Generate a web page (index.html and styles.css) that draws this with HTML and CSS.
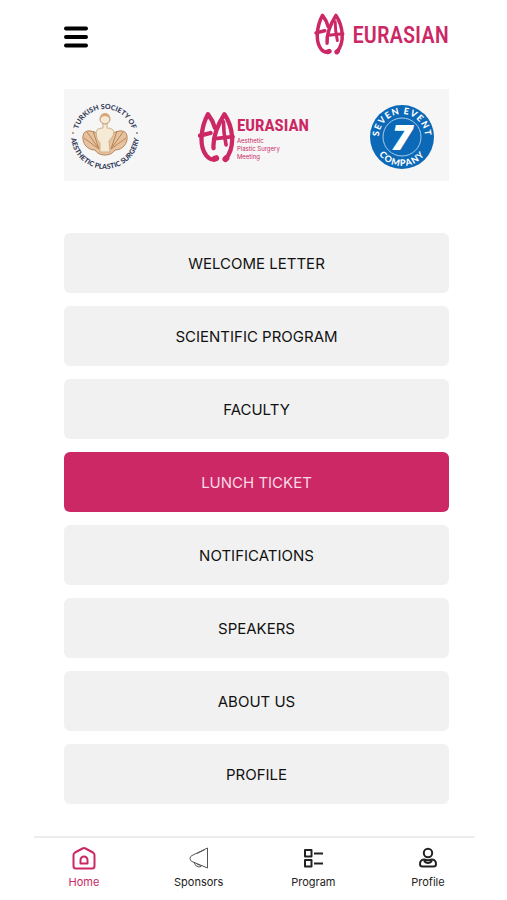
FILE: index.html
```
<!DOCTYPE html>
<html lang="en">
<head>
    <meta charset="UTF-8">
    <meta name="viewport" content="width=device-width, initial-scale=1.0">
    <title>Eurasian</title>
    <link rel="stylesheet" href="styles.css">
</head>
<body>
    <svg width="0" height="0" class="sprite" aria-hidden="true">
        <symbol id="monogram" viewBox="0 0 112 156">
            <g fill="none" stroke="currentColor" stroke-width="13" stroke-linecap="round" stroke-linejoin="round">
                <path d="M54 144Q38 150 25 134Q8 112 11 74Q14 38 30 9Q45 28 51 50"/>
                <path d="M6 74L38 66"/>
                <path d="M47 112Q44 66 80 9Q100 38 103 76Q106 118 84 144"/>
                <path d="M77 32Q77 64 85 102" stroke-width="11"/>
                <path d="M52 83L106 77" stroke-width="11"/>
                <path d="M50 144L55 142M86 142L83 145" stroke-width="18"/>
            </g>
        </symbol>
    </svg>

    <div class="page">
        <header>
            <button class="menu-btn" aria-label="Menu">
                <svg width="24" height="22" viewBox="0 0 24 22" stroke="#000" stroke-width="4" stroke-linecap="round">
                    <path d="M2 2.5h20M2 11h20M2 19.5h20"/>
                </svg>
            </button>
            <div class="logo">
                <svg class="logo-mark"><use href="#monogram"/></svg>
                <span class="logo-name">EURASIAN</span>
            </div>
        </header>

        <section class="banner">
            <svg class="society" viewBox="0 0 76 76">
                <defs>
                    <path id="society-top" d="M10 38a28 28 0 0 1 56 0"/>
                    <path id="society-bottom" d="M4 36a34 34 0 0 0 68 0"/>
                </defs>
                <g fill="#e6c3a0" stroke="#b98355" stroke-width="1">
                    <path d="M38 56C33 56 30 54 28 51C20 51 15 44 16 37Q17 31 24 32Q29 32 33 38h10Q47 32 52 32Q59 31 60 37C61 44 56 51 48 51C46 54 43 56 38 56z"/>
                    <path d="M32 50L17 39M32 50L20 33M32 50L26 32M44 50l15-11M44 50l12-17M44 50l6-18" fill="none"/>
                </g>
                <path d="M36 23v6q-6 0-7 4l1 7 3 4v9h10l-1-11 4-5 1-4q-1-4-7-4v-6z" fill="#f5ead6" stroke="#d0b086" stroke-width="1"/>
                <circle cx="38" cy="20" r="5" fill="#f5ead6" stroke="#c69263"/>
                <path d="M33 20q0-6 5-6t5 6q-2-3-5-3t-5 3" fill="#d7a679"/>
                <circle cx="6" cy="34" r="1" fill="#b98355"/>
                <circle cx="70" cy="34" r="1" fill="#7c8296"/>
                <text class="society-text"><textPath href="#society-top" startOffset="50%">TURKISH SOCIETY OF</textPath></text>
                <text class="society-text"><textPath href="#society-bottom" startOffset="50%">AESTHETIC PLASTIC SURGERY</textPath></text>
            </svg>

            <div class="meeting">
                <svg class="meeting-mark"><use href="#monogram"/></svg>
                <div>
                    <div class="meeting-name">EURASIAN</div>
                    <div class="meeting-sub">Aesthetic<br>Plastic Surgery<br>Meeting</div>
                </div>
            </div>

            <svg class="company" viewBox="0 0 64 64">
                <defs>
                    <path id="company-top" d="M9 32a23 23 0 0 1 46 0"/>
                    <path id="company-bottom" d="M3 32a29 29 0 0 0 58 0"/>
                </defs>
                <circle cx="32" cy="32" r="32" fill="#0b69b7"/>
                <circle cx="32" cy="32" r="19" fill="none" stroke="#a9cdea"/>
                <text class="company-seven" x="32" y="45">7</text>
                <text class="company-text"><textPath href="#company-top" startOffset="50%">SEVEN EVENT</textPath></text>
                <text class="company-text"><textPath href="#company-bottom" startOffset="50%">COMPANY</textPath></text>
            </svg>
        </section>

        <main class="menu">
            <button>WELCOME LETTER</button>
            <button>SCIENTIFIC PROGRAM</button>
            <button>FACULTY</button>
            <button class="active">LUNCH TICKET</button>
            <button>NOTIFICATIONS</button>
            <button>SPEAKERS</button>
            <button>ABOUT US</button>
            <button>PROFILE</button>
        </main>
    </div>

    <nav class="tabs">
        <a href="#" class="tab current">
            <svg viewBox="0 0 24 24" stroke-width="2">
                <path d="M1.500 9Q1.500 7.500 3 6.500l7.500-4q1.500-.8 3 0L21 6.500q1.500 1 1.500 2.500V20q0 2.500-2.500 2.500H4Q1.500 22.500 1.500 20z"/>
                <path d="M8.500 17.500V14a3.500 3.500 0 0 1 7 0v3.500z"/>
            </svg>
            <span>Home</span>
        </a>
        <a href="#" class="tab">
            <svg viewBox="0 0 24 24" stroke-width="1" class="thin">
                <path d="M20.500 2v20L5 15.500Q3 14.500 3 12.500t2-3zM7 16.500q1 4 5 4.500 3 0 2-2M9 17q1 2 4 2M10 7.500l8-4"/>
            </svg>
            <span>Sponsors</span>
        </a>
        <a href="#" class="tab">
            <svg viewBox="0 0 24 24" stroke-width="2">
                <path d="M4 4h6.500v6.500H4zM4 14h6.500v6.500H4zM13 7.500h9M13 17.500h9"/>
            </svg>
            <span>Program</span>
        </a>
        <a href="#" class="tab">
            <svg viewBox="0 0 24 24" stroke-width="2">
                <circle cx="12" cy="7" r="4.200"/>
                <path d="M4 18Q4 14 8 13.500q4 1.500 8 0 4 .5 4 4.500 0 2.500-2.500 2.500h-11Q4 20.500 4 18zM8 15q4 4 8 0"/>
            </svg>
            <span>Profile</span>
        </a>
    </nav>
</body>
</html>
```
FILE: styles.css
```
* {
    margin: 0;
    padding: 0;
    box-sizing: border-box;
}

body {
    background: #fff;
    color: #111;
    min-height: 100vh;
    display: flex;
    flex-direction: column;
    font-family: Inter, 'Liberation Sans', sans-serif;
}

.sprite {
    position: absolute;
}

.page {
    flex: 1;
    padding: 13px 58px 32px 64px;
}

header {
    display: flex;
    justify-content: space-between;
    align-items: center;
    height: 42px;
    margin-bottom: 34px;
}

button {
    border: none;
    background: none;
    font-family: inherit;
    cursor: pointer;
}

.menu-btn {
    display: flex;
    padding: 6px 0 0;
}

.logo {
    display: flex;
    align-items: center;
    gap: 8px;
    color: #cb2865;
}

.logo-mark {
    width: 31px;
    height: 42px;
}

.logo-name {
    font-family: 'Roboto Condensed', 'Liberation Sans Narrow', Roboto, sans-serif;
    font-size: 23px;
    font-weight: 500;
    line-height: 42px;
    padding-top: 3px;
}

.banner {
    display: flex;
    justify-content: space-between;
    align-items: center;
    height: 92px;
    padding: 3px 15px 0 3px;
    margin-bottom: 52px;
    background: #f6f6f6;
}

.society {
    width: 76px;
    height: 76px;
}

.society-text {
    font-family: Lato, sans-serif;
    font-size: 7px;
    font-weight: 900;
    text-anchor: middle;
    fill: #333b59;
}

.meeting {
    display: flex;
    align-items: center;
    gap: 2px;
    margin-right: 6px;
    color: #cb2865;
}

.meeting-mark {
    width: 37px;
    height: 52px;
}

.meeting-name {
    font-family: 'Roboto Condensed', 'Liberation Sans Narrow', Roboto, sans-serif;
    font-size: 17px;
    font-weight: bold;
    line-height: 24px;
}

.meeting-sub {
    font-size: 6px;
    line-height: 8px;
}

.company {
    width: 64px;
    height: 64px;
}

.company-text {
    font-family: Lato, sans-serif;
    font-size: 9px;
    font-weight: 900;
    letter-spacing: 1px;
    text-anchor: middle;
    fill: #fff;
}

.company-seven {
    font-family: 'Open Sans', sans-serif;
    font-size: 36px;
    font-weight: 800;
    font-style: italic;
    text-anchor: middle;
    fill: #fff;
}

.menu {
    display: flex;
    flex-direction: column;
    gap: 13px;
}

.menu button {
    height: 60px;
    border-radius: 6px;
    background: #f1f1f1;
    color: #111;
    font-size: 15px;
}

.menu .active {
    background: #cb2865;
    color: #fbd9e5;
}

.tabs {
    display: flex;
    justify-content: space-between;
    margin: 0 32px 0 34px;
    padding: 8px 5px 11px 8px;
    border-top: 2px solid #ededed;
}

.tab {
    width: 84px;
    display: flex;
    flex-direction: column;
    align-items: center;
    gap: 5px;
    color: #222;
    font-size: 11px;
    line-height: 14px;
    text-decoration: none;
}

.tab svg {
    width: 24px;
    height: 24px;
    fill: none;
    stroke: currentColor;
    stroke-linejoin: round;
}

.tab .thin {
    stroke: #555;
}

.tab.current {
    color: #cb2865;
}
```
